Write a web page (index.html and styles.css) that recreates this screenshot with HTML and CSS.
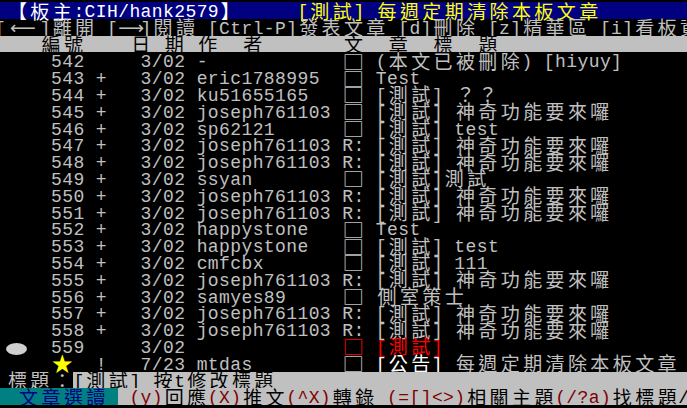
FILE: index.html
```html
<!DOCTYPE html>
<html lang="zh-Hant">
<head>
    <meta charset="UTF-8">
    <title>CIH 看板</title>
    <link rel="stylesheet" href="styles.css">
</head>
<body>
    <div class="screen">
        <div class="row title"> <span class="w">【板主</span>:CIH/hank2579<span class="w">】</span>     <span class="yel">[<span class="w">測試</span>] <span class="w">每週定期清除本板文章</span></span></div>
        <div class="row">[<span class="c3 arrow">⟵</span>]<span class="w">離開</span> [<span class="c2 arrow">⟶</span>]<span class="w">閱讀</span> [Ctrl-P]<span class="w">發表文章</span> [d]<span class="w">刪除</span> [z]<span class="w">精華區</span> [i]<span class="w">看板資訊</span>/<span class="w">設定</span></div>
        <div class="row head">    <span class="w">編號</span>    <span class="w">日</span> <span class="w">期</span> <span class="w">作</span>  <span class="w">者</span>       <span class="w">文</span>  <span class="w">章</span>  <span class="w">標</span>  <span class="w">題</span></div>

        <div class="row">     542     3/02 -            <span class="c2 box">□</span> (<span class="w">本文已被刪除</span>) [hiyuy]</div>
        <div class="row">     543 +   3/02 eric1788995  <span class="c2 box">□</span> Test</div>
        <div class="row">     544 +   3/02 ku51655165   <span class="c2 box">□</span> [<span class="w">測試</span>] <span class="w">？？</span></div>
        <div class="row">     545 +   3/02 joseph761103 <span class="c2 box">□</span> [<span class="w">測試</span>] <span class="w">神奇功能要來囉</span></div>
        <div class="row">     546 +   3/02 sp62121      <span class="c2 box">□</span> [<span class="w">測試</span>] test</div>
        <div class="row">     547 +   3/02 joseph761103 R: [<span class="w">測試</span>] <span class="w">神奇功能要來囉</span></div>
        <div class="row">     548 +   3/02 joseph761103 R: [<span class="w">測試</span>] <span class="w">神奇功能要來囉</span></div>
        <div class="row">     549 +   3/02 ssyan        <span class="c2 box">□</span> [<span class="w">測試</span>]<span class="w">測試</span></div>
        <div class="row">     550 +   3/02 joseph761103 R: [<span class="w">測試</span>] <span class="w">神奇功能要來囉</span></div>
        <div class="row">     551 +   3/02 joseph761103 R: [<span class="w">測試</span>] <span class="w">神奇功能要來囉</span></div>
        <div class="row">     552 +   3/02 happystone   <span class="c2 box">□</span> Test</div>
        <div class="row">     553 +   3/02 happystone   <span class="c2 box">□</span> [<span class="w">測試</span>] test</div>
        <div class="row">     554 +   3/02 cmfcbx       <span class="c2 box">□</span> [<span class="w">測試</span>] 111</div>
        <div class="row">     555 +   3/02 joseph761103 R: [<span class="w">測試</span>] <span class="w">神奇功能要來囉</span></div>
        <div class="row">     556 +   3/02 samyes89     <span class="c2 box">□</span> <span class="w">側室策士</span></div>
        <div class="row">     557 +   3/02 joseph761103 R: [<span class="w">測試</span>] <span class="w">神奇功能要來囉</span></div>
        <div class="row">     558 +   3/02 joseph761103 R: [<span class="w">測試</span>] <span class="w">神奇功能要來囉</span></div>
        <div class="row"> <span class="dot"></span>  559     3/02              <span class="red"><span class="c2 box">□</span> [<span class="w">測試</span>]</span></div>
        <div class="row">     <span class="c2 star">★</span>  !   7/23 mtdas        <span class="c2 box">□</span> <span class="wht">[<span class="w">公告</span>]</span> <span class="w">每週定期清除本板文章</span></div>

        <div class="row bar"><span> <span class="w">標題：</span></span><span class="fill">[<span class="w">測試</span>] <span class="w">按</span>t<span class="w">修改標題</span>_</span></div>
        <div class="row bar"><span class="teal">  <span class="w">文章選讀</span> </span><span class="fill"> <span class="key">(y)</span><span class="w">回應</span><span class="key">(X)</span><span class="w">推文</span><span class="key">(^X)</span><span class="w">轉錄</span> <span class="key">(=[]&lt;&gt;)</span><span class="w">相關主題</span><span class="key">(/?a)</span><span class="w">找標題</span>/<span class="w">作者</span></span></div>
    </div>
</body>
</html>
```

FILE: styles.css
```css
* {
    margin: 0;
    padding: 0;
    box-sizing: border-box;
}

body {
    background: #000;
    overflow: hidden;
}

/* terminal grid: 11.2px per half-width cell, 16.8px per row */
.screen {
    margin-left: -5px;
    padding-top: 2px;
    font-family: "Liberation Mono", monospace;
    font-size: 18px;
    letter-spacing: 0.4px;
    color: #c0c0c0;
}

.row {
    height: 16.8px;
    line-height: 21px;
    white-space: pre;
}

/* full-width (2 cell) characters */
.w {
    font-family: "Noto Sans CJK TC", sans-serif;
    font-size: 19px;
    letter-spacing: 3.4px;
    padding-left: 1.7px;
    margin-right: -1.7px;
    line-height: 0;
    vertical-align: -1.5px;
}

.w .w {
    vertical-align: baseline;
}

.c2,
.c3 {
    display: inline-block;
    width: 22.4px;
    text-align: center;
    line-height: 0;
    letter-spacing: 0;
    font-family: "Noto Sans CJK TC", sans-serif;
    font-size: 18px;
    vertical-align: -1.5px;
}

.c3 {
    width: 33.6px;
}

.arrow {
    font-family: "DejaVu Sans", sans-serif;
    vertical-align: 0;
}

.box {
    transform: scaleX(1.2);
}

.star {
    font-size: 21px;
    color: #ffff00;
}

.dot {
    display: inline-block;
    width: 21px;
    height: 12px;
    margin-right: 1.4px;
    border-radius: 50%;
    background: #d0d0d0;
    vertical-align: -2px;
}

.title {
    background: #000080;
    color: #fff;
}

.yel {
    color: #ffff00;
}

.wht {
    color: #fff;
}

.red {
    color: #ff0000;
}

.head {
    background: #c0c0c0;
    color: #000;
}

.bar {
    display: flex;
}

.bar .fill {
    flex: 1;
    min-width: 0;
    overflow: hidden;
    background: #c0c0c0;
    color: #000;
}

.teal {
    background: #008080;
    color: #000080;
}

.key {
    color: #800000;
}
```
